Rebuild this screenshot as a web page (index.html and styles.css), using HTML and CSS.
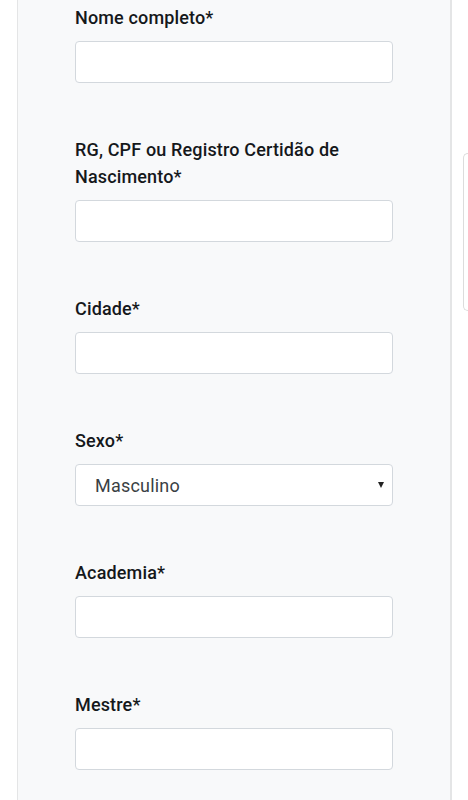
FILE: index.html
```html
<!DOCTYPE html>
<html lang="pt-BR">
<head>
<meta charset="utf-8">
<link rel="stylesheet" href="styles.css">
</head>
<body>
<div class="page">
  <form class="panel">
    <div class="group">
      <label class="label">Nome completo*</label>
      <input class="field" type="text">
    </div>
    <div class="group">
      <label class="label">RG, CPF ou Registro Certidão de Nascimento*</label>
      <input class="field" type="text">
    </div>
    <div class="group">
      <label class="label">Cidade*</label>
      <input class="field" type="text">
    </div>
    <div class="group">
      <label class="label">Sexo*</label>
      <div class="select-wrap">
        <select class="field select">
          <option>Masculino</option>
          <option>Feminino</option>
        </select>
        <span class="caret"></span>
      </div>
    </div>
    <div class="group">
      <label class="label">Academia*</label>
      <input class="field" type="text">
    </div>
    <div class="group">
      <label class="label">Mestre*</label>
      <input class="field" type="text">
    </div>
  </form>
  <div class="side-card"></div>
</div>
</body>
</html>
```

FILE: styles.css
```css
html, body {
  margin: 0;
  padding: 0;
  background: #ffffff;
  height: 100%;
  overflow: hidden;
}

body {
  font-family: Roboto, "Liberation Sans", Arial, sans-serif;
  color: #212529;
}

.page {
  display: flex;
  align-items: flex-start;
  height: 800px;
  width: 468px;
  overflow: hidden;
}

.panel {
  margin: 0 0 0 17px;
  width: 435px;
  height: 800px;
  box-sizing: border-box;
  background: #f8f9fa;
  border-left: 1px solid #e4e5e6;
  border-right: 2px solid #e4e5e6;
  padding: 4px 0 0 57px;
  flex: none;
}

.group {
  width: 318px;
  margin-bottom: 53px;
}

.label {
  display: block;
  font-size: 18px;
  font-weight: 500;
  letter-spacing: 0.15px;
  line-height: 27px;
  margin-bottom: 10px;
  color: #15181b;
}

.field {
  display: block;
  box-sizing: border-box;
  width: 318px;
  height: 42px;
  margin: 0;
  background: #ffffff;
  border: 1px solid #d3d8dd;
  border-radius: 4px;
  font-family: Roboto, "Liberation Sans", Arial, sans-serif;
  font-size: 18px;
  letter-spacing: 0.2px;
  color: #495057;
  outline: none;
}

.select-wrap {
  position: relative;
}

.select {
  -webkit-appearance: none;
  appearance: none;
  padding: 0 30px 0 19px;
  color: #3a3f44;
}

.caret {
  position: absolute;
  right: 9px;
  top: 18px;
  width: 0;
  height: 0;
  border-left: 3px solid transparent;
  border-right: 3px solid transparent;
  border-top: 6px solid #222;
}

.side-card {
  margin: 153px 0 0 11px;
  flex: none;
  width: 5px;
  height: 158px;
  box-sizing: border-box;
  border: 1px solid #dcdcdc;
  border-right: none;
  border-radius: 6px 0 0 6px;
  background: #ffffff;
}
```
